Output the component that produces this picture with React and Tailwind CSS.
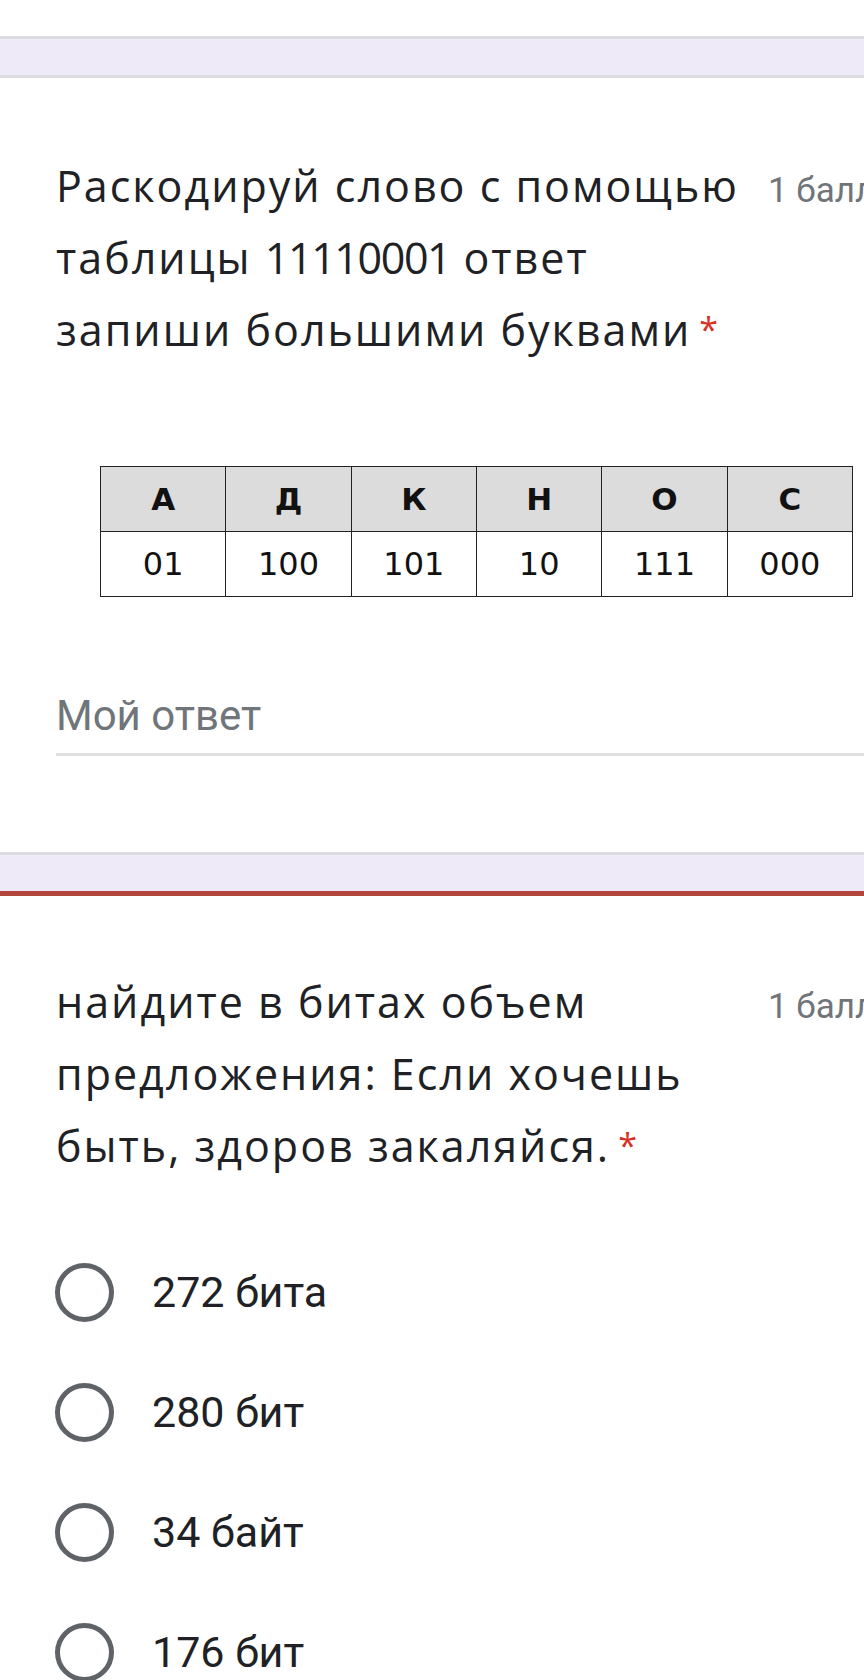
import React from "react";

const titleFont = { fontFamily: '"Open Sans", "Noto Sans", sans-serif' };
const uiFont = { fontFamily: 'Roboto, "Noto Sans", sans-serif' };
const tableFont = { fontFamily: '"DejaVu Sans", Verdana, sans-serif' };

function Gap({ error }) {
  return (
    <div className="flex flex-col">
      <div className="h-[3px] bg-[#dcdbe1]" />
      <div className="h-[36px] bg-[#eeeaf8]" />
      {error ? (
        <div className="h-[5px] bg-[#b3453c]" />
      ) : (
        <div className="h-[3px] bg-[#dcdbe1]" />
      )}
    </div>
  );
}

function Title({ lines }) {
  return (
    <div className="flex items-baseline pl-[56px]">
      <div
        className="w-[712px] shrink-0 text-[43px] leading-[72px] tracking-[2px] text-[#202124]"
        style={titleFont}
      >
        {lines.map((l, i) => (
          <div key={i} className="whitespace-nowrap">
            {l}
            {i === lines.length - 1 && (
              <span className="relative -top-[4px] ml-[8px] text-[34px] text-[#d93025]">*</span>
            )}
          </div>
        ))}
      </div>
      <div
        className="whitespace-nowrap text-[35px] text-[#70757a]"
        style={uiFont}
      >
        1 балл
      </div>
    </div>
  );
}

const letters = ["А", "Д", "К", "Н", "О", "С"];
const codes = ["01", "100", "101", "10", "111", "000"];

function CodeTable() {
  return (
    <div
      className="ml-[100px] grid w-[753px] grid-cols-6 border-l-[1.5px] border-t-[1.5px] border-[#222]"
      style={tableFont}
    >
      {letters.map((l) => (
        <div
          key={l}
          className="flex h-[65px] items-center justify-center border-b-[1.5px] border-r-[1.5px] border-[#222] bg-[#dcdcdc] text-[31px] font-bold text-[#111]"
        >
          {l}
        </div>
      ))}
      {codes.map((c, i) => (
        <div
          key={i}
          className="flex h-[65px] items-center justify-center border-b-[1.5px] border-r-[1.5px] border-[#222] bg-white text-[32px] text-[#111]"
        >
          {c}
        </div>
      ))}
    </div>
  );
}

function Radio({ label }) {
  return (
    <div className="flex h-[120px] items-center pl-[55px]">
      <div className="h-[59px] w-[59px] shrink-0 rounded-full border-[5px] border-[#5f6368]" />
      <div className="ml-[38px] text-[43px] text-[#202124]" style={uiFont}>
        {label}
      </div>
    </div>
  );
}

export default function App() {
  return (
    <div className="h-[1680px] w-[864px] overflow-hidden bg-white">
      <div className="h-[36px] bg-white" />
      <Gap />
      <section className="h-[774px] bg-white pt-[72px]">
        <Title
          lines={[
            "Раскодируй слово с помощью",
            <>
              таблицы <span className="tracking-[-1.4px]">11110001</span> ответ
            </>,
            "запиши большими буквами",
          ]}
        />
        <div className="mt-[97px]">
          <CodeTable />
        </div>
        <div className="ml-[56px] mt-[94px]">
          <div className="text-[42px] leading-[50px] text-[#70757a]" style={uiFont}>
            Мой ответ
          </div>
          <div className="mt-[12px] h-[3px] bg-[#e0e0e0]" />
        </div>
      </section>
      <Gap error />
      <section className="bg-white pt-[70px]">
        <Title
          lines={[
            "найдите в битах объем",
            "предложения: Если хочешь",
            "быть, здоров закаляйся.",
          ]}
        />
        <div className="mt-[47px]">
          {["272 бита", "280 бит", "34 байт", "176 бит"].map((o) => (
            <Radio key={o} label={o} />
          ))}
        </div>
      </section>
    </div>
  );
}
